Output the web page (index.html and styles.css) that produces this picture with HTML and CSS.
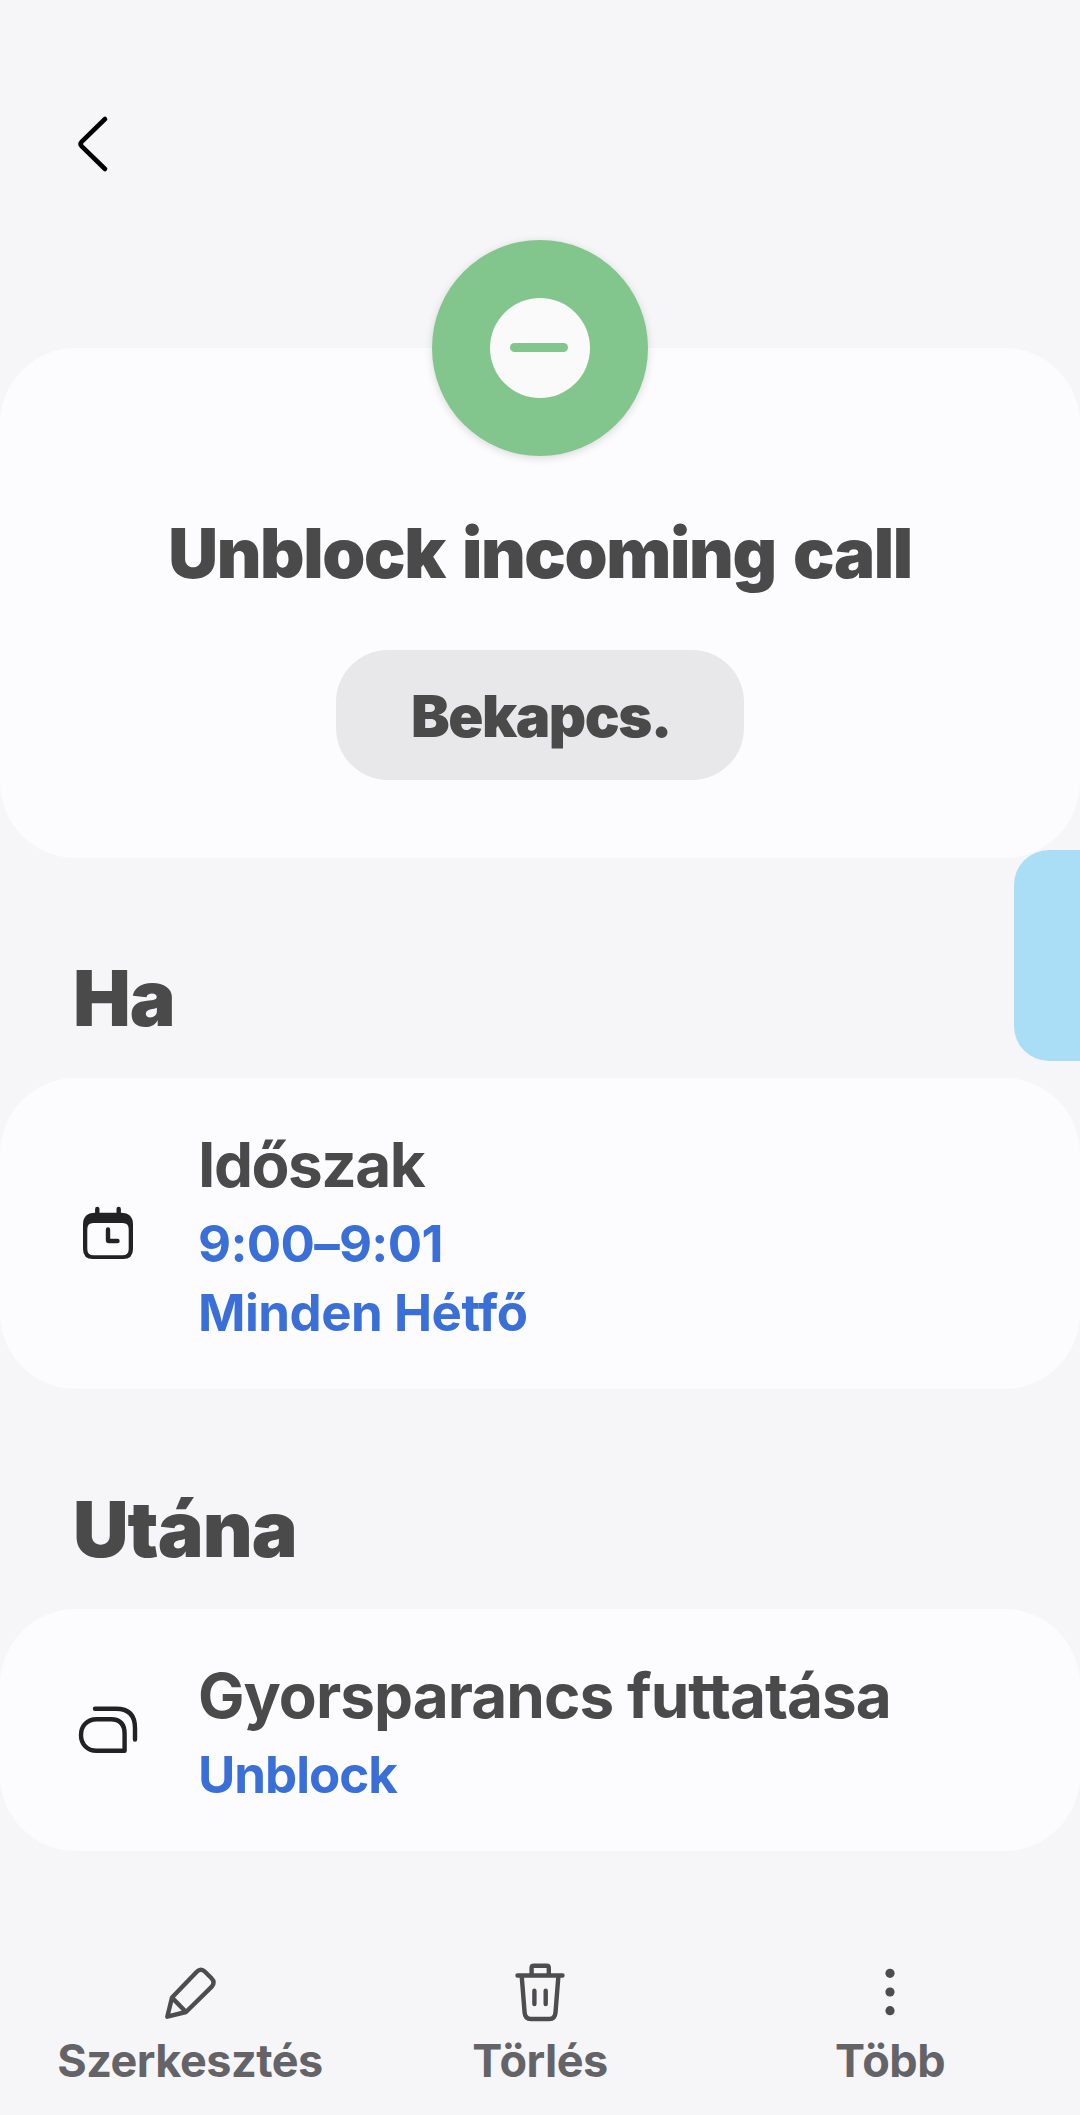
FILE: index.html
```html
<!DOCTYPE html>
<html lang="hu">
  <head>
    <meta charset="utf-8">
    <meta name="viewport" content="width=device-width, initial-scale=1">
    <title>Unblock incoming call</title>
    <link rel="stylesheet" href="styles.css">
  </head>
  <body>
    <!-- top bar -->
    <header class="header">
      <svg class="back" viewBox="0 0 60 60"><path d="M37 5 13.800 27.600q-2.400 2.400 0 4.800L37 55"/></svg>
    </header>
    <!-- routine summary -->
    <section class="card summary">
      <div class="badge">
        <div class="badge-inner"><div class="badge-line"></div></div>
      </div>
      <h1 class="title">Unblock incoming call</h1>
      <button class="button">Bekapcs.</button>
    </section>
    <!-- condition -->
    <h2 class="section-title">Ha</h2>
    <section class="card item">
      <svg class="icon" viewBox="0 0 60 60">
        <path class="solid" fill-rule="evenodd" d="M17 9.700H43Q55 9.700 55 21.700V46Q55 56 45 56H15Q5 56 5 46V21.700Q5 9.700 17 9.700ZM15.300 20Q9.300 20 9.300 26V46Q9.300 52.300 15.600 52.300H44.400Q50.700 52.300 50.700 46V26Q50.700 20 44.700 20Z"/>
        <path d="M19.300 6v5M40.700 6v5M30 26.500V37q0 1 1 1h8.500"/>
      </svg>
      <div class="text">
        <p class="name">Időszak</p>
        <p class="value">9:00–9:01</p>
        <p class="value value-wide">Minden Hétfő</p>
      </div>
    </section>
    <!-- action -->
    <h2 class="section-title">Utána</h2>
    <section class="card item">
      <svg class="icon" viewBox="0 0 60 60">
        <path d="M18.700 19.300H33Q46.600 19.300 46.600 34V50.800H18.700C9 50.800 3 44 3 35S9 19.300 18.700 19.300ZM17 8.700H38Q57 8.700 57 28V39.500"/>
      </svg>
      <div class="text">
        <p class="name name-long">Gyorsparancs futtatása</p>
        <p class="value value-tight">Unblock</p>
      </div>
    </section>
    <!-- bottom bar -->
    <nav class="nav">
      <a class="nav-item">
        <svg viewBox="0 0 60 60"><path d="M7.300 54.700 12 35.600 36.800 9.800Q40.900 5.700 45 9.800L51.500 16.300Q55.500 20.400 51.800 24.600L26 50ZM12 35.600 26 50"/></svg>
        <span>Szerkesztés</span>
      </a>
      <a class="nav-item">
        <svg viewBox="0 0 60 60"><path d="M7.500 13.500H52.500M21.600 13V6Q21.600 3.800 23.800 3.800H36.600Q38.800 3.800 38.800 6V13M11.700 14 14.600 50.500Q15 57 21 57H39.500Q45 57 45.500 50.500L48.400 14M24.400 28.700V42M35.700 28.700V42"/></svg>
        <span>Törlés</span>
      </a>
      <a class="nav-item">
        <svg class="dots" viewBox="0 0 60 60"><circle cx="30" cy="11.300" r="4.600"/><circle cx="30" cy="30" r="4.600"/><circle cx="30" cy="48.700" r="4.600"/></svg>
        <span>Több</span>
      </a>
    </nav>
    <!-- edge panel handle -->
    <div class="handle"></div>
  </body>
</html>
```
FILE: styles.css
```css
* {
  box-sizing: border-box;
  margin: 0;
  padding: 0;
}
body {
  position: relative;
  width: 1080px;
  height: 2115px;
  overflow: hidden;
  background: #f6f6f9;
  color: #4a4a4a;
  font-family: Inter, "Noto Sans", sans-serif;
}
svg {
  display: block;
  width: 60px;
  height: 60px;
  fill: none;
  stroke: #4d4d50;
  stroke-width: 4.4;
  stroke-linecap: round;
  stroke-linejoin: round;
}
/* -------- top bar ------------- */
.header {
  height: 348px;
  padding: 114px 68px 0;
}
.header .back {
  stroke: #000;
  stroke-width: 4.6;
}
/* -------- cards ------------- */
.card {
  border-radius: 76px;
  background: #fcfcfe;
}
.summary {
  display: flex;
  flex-direction: column;
  align-items: center;
  height: 510px;
}
.badge {
  display: flex;
  align-items: center;
  justify-content: center;
  width: 216px;
  height: 216px;
  margin-top: -108px;
  border-radius: 50%;
  background: #83c68d;
  box-shadow: 0 2px 8px rgba(0, 0, 0, .14);
}
.badge-inner {
  width: 100px;
  height: 100px;
  padding: 45px 0 0 20px;
  border-radius: 50%;
  background: #fafafa;
}
.badge-line {
  width: 58px;
  height: 9px;
  border-radius: 5px;
  background: #83c68d;
}
.title {
  margin-top: 55px;
  font-size: 69px;
  font-weight: 900;
  line-height: 84px;
  letter-spacing: -1.4px;
  word-spacing: 5px;
  white-space: nowrap;
}
.button {
  width: 408px;
  height: 130px;
  margin-top: 55px;
  padding: 1px 0 0 2px;
  border: 0;
  border-radius: 52px;
  background: #e8e8ea;
  color: inherit;
  font-family: inherit;
  font-size: 58px;
  font-weight: 900;
  letter-spacing: -1.5px;
}
/* -------- sections ------------- */
.section-title {
  padding: 95px 73px 35px;
  font-size: 77px;
  font-weight: 900;
  line-height: 90px;
  letter-spacing: -1px;
}
.item {
  display: flex;
  align-items: center;
  gap: 60px;
  padding: 49px 78px 42px;
}
.item .icon {
  margin-top: -8px;
  stroke: #222224;
}
.icon .solid {
  fill: #222224;
  stroke: none;
}
.name {
  margin-bottom: 6px;
  font-size: 62px;
  font-weight: 700;
  line-height: 76px;
  letter-spacing: -1.5px;
  white-space: nowrap;
}
.name-long {
  letter-spacing: -.95px;
}
.value {
  color: #3b6fd8;
  font-size: 51px;
  font-weight: 700;
  line-height: 69px;
  letter-spacing: -.7px;
}
.value-wide {
  letter-spacing: -.5px;
}
.value-tight {
  letter-spacing: -1px;
}
/* -------- bottom bar ------------- */
.nav {
  display: flex;
  padding: 111px 15px 0;
}
.nav-item {
  display: flex;
  flex: 1;
  flex-direction: column;
  align-items: center;
  gap: 11px;
  color: #646468;
  font-size: 45px;
  font-weight: 700;
  line-height: 56px;
  letter-spacing: -.5px;
}
.dots {
  fill: #4d4d50;
  stroke: none;
}
/* -------- edge panel handle ------------- */
.handle {
  position: absolute;
  top: 850px;
  right: 0;
  width: 66px;
  height: 211px;
  border-radius: 35px 0 0 35px;
  background: #a9def6;
}
```
